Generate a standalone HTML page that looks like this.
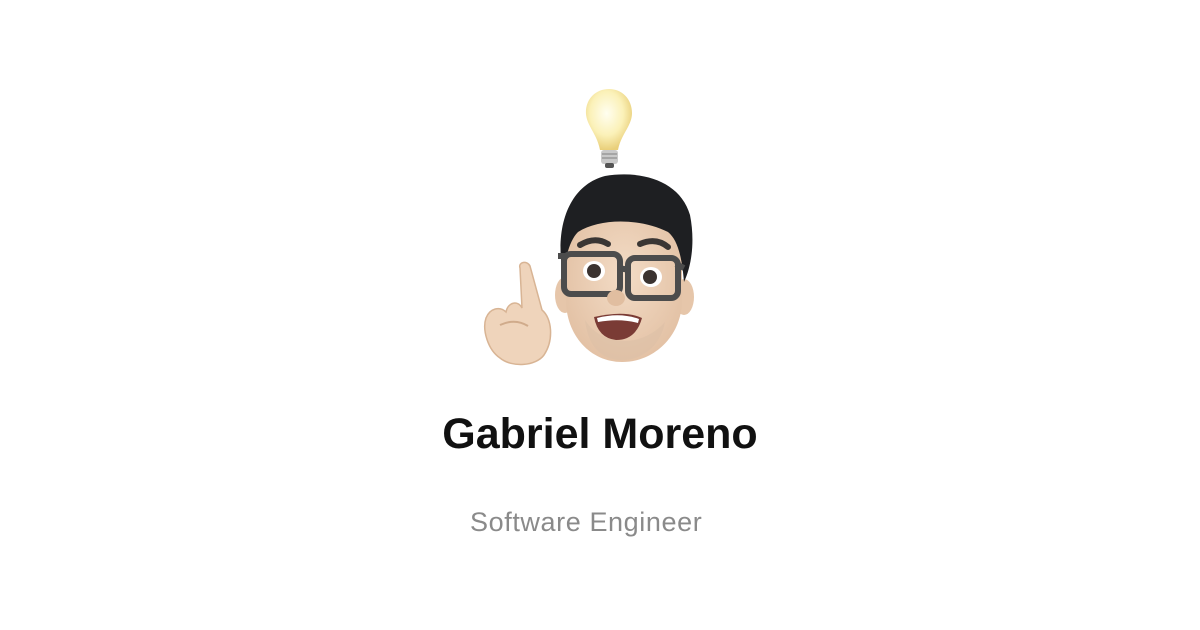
<!DOCTYPE html>
<html><head><style>
html,body{margin:0;background:#fff;width:1200px;height:630px;overflow:hidden;font-family:"Liberation Sans",sans-serif}
.t{position:absolute;left:0;width:1200px;text-align:center}
</style></head><body>
<svg width="1200" height="630" style="position:absolute;left:0;top:0">
<defs>
<radialGradient id="bulb" cx="0.45" cy="0.4" r="0.6"><stop offset="0" stop-color="#fffef0"/><stop offset="0.6" stop-color="#fbf1b8"/><stop offset="1" stop-color="#e9cf7a"/></radialGradient>
<radialGradient id="skin" cx="0.5" cy="0.45" r="0.6"><stop offset="0" stop-color="#f3dcc6"/><stop offset="1" stop-color="#e2c0a3"/></radialGradient>
</defs>
<path d="M609 89 C595 89 585 100 586 114 C587 126 597 134 600 150 L618 150 C621 134 632 126 632 113 C632 99 622 89 609 89Z" fill="url(#bulb)"/>
<rect x="601" y="150" width="17" height="14" rx="3" fill="#c9c9c9"/>
<path d="M602 154h15M602 158h15" stroke="#999" stroke-width="1.5"/>
<rect x="605" y="163" width="9" height="5" rx="2" fill="#555"/>
<ellipse cx="565" cy="295" rx="10" ry="18" fill="#e6c6aa"/>
<ellipse cx="684" cy="297" rx="10" ry="18" fill="#e6c6aa"/>
<path d="M566 240 C566 215 590 205 625 205 C662 205 682 220 682 250 L682 300 C682 335 655 362 622 362 C590 362 566 335 566 300Z" fill="url(#skin)"/>
<path d="M585 320 C600 345 640 350 665 322 C660 348 640 360 622 360 C600 360 588 345 585 320Z" fill="#dcbfa6" opacity="0.6"/>
<path d="M563 275 C554 225 570 185 605 176 C640 170 680 180 690 215 C695 240 692 265 684 282 C682 258 678 240 668 232 C640 218 600 218 578 232 C570 240 566 255 563 275Z" fill="#1e1f22"/>
<path d="M580 245 Q595 236 608 244" stroke="#3a3634" stroke-width="6" fill="none" stroke-linecap="round"/>
<path d="M640 244 Q656 237 668 247" stroke="#3a3634" stroke-width="6" fill="none" stroke-linecap="round"/>
<ellipse cx="594" cy="271" rx="11" ry="10" fill="#fff"/><circle cx="594" cy="271" r="7" fill="#3b3330"/>
<ellipse cx="651" cy="277" rx="11" ry="10" fill="#fff"/><circle cx="650" cy="277" r="7" fill="#3b3330"/>
<rect x="564" y="254" width="56" height="40" rx="7" fill="none" stroke="#4c4c4c" stroke-width="6"/>
<rect x="628" y="258" width="50" height="40" rx="7" fill="none" stroke="#4c4c4c" stroke-width="6"/>
<path d="M558 256 L566 256 M676 264 L684 268 M618 268 L630 270" stroke="#4c4c4c" stroke-width="6"/>
<ellipse cx="616" cy="298" rx="9" ry="8" fill="#e1bea0"/>
<path d="M594 317 Q625 310 642 318 Q636 340 616 340 Q598 338 594 317Z" fill="#7a3b35"/>
<path d="M597 318 Q620 312 639 319 L638 323 Q620 318 598 322Z" fill="#fff"/>
<path d="M520 268 C518 262 527 260 530 266 L542 310 C552 318 554 340 544 355 C536 366 512 368 500 358 C488 350 482 330 486 318 C490 308 500 306 506 312 C508 302 518 300 522 308 Z" fill="#efd4bb" stroke="#d8b494" stroke-width="1.5"/>
<path d="M500 325 Q515 318 528 326" stroke="#d0ab8b" stroke-width="2" fill="none"/>
</svg>
<div class="t" style="top:410px;font-size:43px;font-weight:bold;color:#111;">Gabriel Moreno</div>
<div style="position:absolute;left:470px;top:507px;font-size:27px;color:#8a8a8a;letter-spacing:0.6px;white-space:nowrap">Software Engineer</div>
</body></html>
